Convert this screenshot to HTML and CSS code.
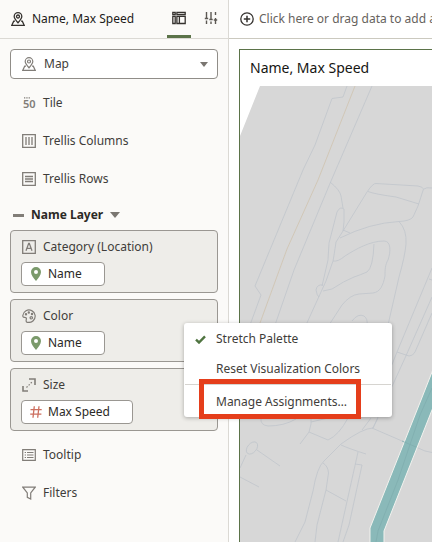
FILE: index.html
```html
<!DOCTYPE html>
<html lang="en">
<head>
<meta charset="utf-8">
<meta name="viewport" content="width=device-width, initial-scale=1">
<title>Name, Max Speed</title>
<link rel="stylesheet" href="styles.css">
</head>
<body>
<svg class="defs" aria-hidden="true">
  <symbol id="map-pin" viewBox="0 0 14 14">
    <path d="M7 10.800C4.800 8.300 3.200 6.500 3.200 4.500a3.800 3.800 0 0 1 7.600 0C10.800 6.500 9.200 8.300 7 10.800Z"/>
    <circle cx="7" cy="4.500" r="1.500"/>
    <path d="M4 9.200H2.700L.8 13.300h12.400L11.300 9.200H10"/>
  </symbol>
  <symbol id="pin" viewBox="0 0 10 14">
    <path fill="#7b9a6b" fill-rule="evenodd" d="M5 0a5 5 0 0 0-5 5c0 3 2.500 6 5 9 2.500-3 5-6 5-9a5 5 0 0 0-5-5Zm0 3a2 2 0 1 1 0 4 2 2 0 0 1 0-4Z"/>
  </symbol>
</svg>

<div class="app">
  <aside class="sidebar">
    <header class="side-head">
      <svg class="icon dark"><use href="#map-pin"/></svg>
      <span class="side-title">Name, Max Speed</span>
      <button class="tab active" type="button" aria-label="Grammar">
        <svg class="icon dark" viewBox="0 0 14 14"><path d="M.8 1.500h2.400v2.200H.8zM.8 5.300h2.400v7.200H.8zM4.900 1.500h8.300v2.200H4.900zM4.900 5.300h8.300v7.200H4.900zM7.400 5.300v7.200"/></svg>
      </button>
      <button class="tab" type="button" aria-label="Properties">
        <svg class="icon sliders" viewBox="0 0 14 14"><path d="M2.500 1v6M2.500 9.500V13M.8 7.500h3.400M7 1v7M7 10.500V13M5.300 8.500h3.400M11.500 1v3M11.500 7V13M9.800 9h3.400"/></svg>
      </button>
    </header>

    <div class="side-body">
      <div class="picker">
        <svg class="icon"><use href="#map-pin"/></svg>
        <select class="picker-select" aria-label="Visualization type"><option>Map</option></select>
        <span class="caret"></span>
      </div>

      <ul class="rows">
        <li class="row">
          <svg class="icon tile-icon" viewBox="0 0 14 14"><path d="M2 1.800h1.300M4.300 1.800h1.300M6.600 1.800h1.300"/><text class="tile-digits" x="1" y="12">50</text></svg>
          Tile
        </li>
        <li class="row">
          <svg class="icon" viewBox="0 0 14 14"><path d="M.7.7h12.600v12.600H.7zM4 3v8M7 3v8M10 3v8" stroke-width="1.300"/></svg>
          Trellis Columns
        </li>
        <li class="row">
          <svg class="icon" viewBox="0 0 14 14"><path d="M.7.7h12.600v12.600H.7zM3 4.500h8M3 7h8M3 9.500h8" stroke-width="1.300"/></svg>
          Trellis Rows
        </li>
      </ul>

      <div class="layer-head">
        <button class="collapse" type="button" aria-label="Collapse layer"></button>
        <h2 class="layer-title">Name Layer</h2>
        <button class="layer-menu" type="button" aria-label="Layer menu"><span class="caret caret-large"></span></button>
      </div>

      <div class="cards">
        <section class="card">
          <h3 class="card-label">
            <svg class="icon" viewBox="0 0 14 14"><path d="M.7.7h12.600v12.600H.7zM4 10.800 6.700 3.400h.6L10 10.800M5 8.300h4" stroke-width="1.300"/></svg>
            Category (Location)
          </h3>
          <button class="chip" type="button"><svg class="chip-pin"><use href="#pin"/></svg>Name</button>
        </section>
        <section class="card">
          <h3 class="card-label">
            <svg class="icon" viewBox="0 0 14 14"><path d="M4.800 13.100C7 13.800 9.500 13.300 11.200 11.700A6.200 6.200 0 1 0 .8 6.500c-.1 1.200.5 2 1.600 1.900 1.300-.1 2.200.3 2 1.600-.2 1-.8 2.500.4 3.100Z"/><circle cx="4" cy="5.200" r=".6"/><circle cx="6.800" cy="3.500" r=".6"/><circle cx="10" cy="5" r=".6"/><circle cx="9.300" cy="8.800" r="1.200"/></svg>
            Color
          </h3>
          <button class="chip" type="button"><svg class="chip-pin"><use href="#pin"/></svg>Name</button>
        </section>
        <section class="card">
          <h3 class="card-label">
            <svg class="icon" viewBox="0 0 14 14"><path d="M7 1h6v6M1 8v5h5" stroke-width="1.600"/><path d="M4.500 9.500 10 4" stroke-dasharray="1.500 1.500"/></svg>
            Size
          </h3>
          <button class="chip chip-wide" type="button">
            <svg class="chip-hash" viewBox="0 0 12 12"><path d="M4.300.3 3 11.700M9 .3 7.700 11.700M.5 3.700h11.200M.2 8.200h11.200"/></svg>Max Speed</button>
        </section>
      </div>

      <ul class="rows">
        <li class="row">
          <svg class="icon" viewBox="0 0 14 14"><path d="M.7 1.700h12.600v10.600H.7zM5 4.500h6.500M5 7h6.500M5 9.500h6.500M2.700 4.500H4M2.700 7H4M2.700 9.500H4" stroke-width="1.200"/></svg>
          Tooltip
        </li>
        <li class="row">
          <svg class="icon" viewBox="0 0 14 14"><path d="M.8 1.200h12.400L8.700 7v6l-3.400-1.700V7Z" stroke-width="1.200"/></svg>
          Filters
        </li>
      </ul>
    </div>
  </aside>

  <main class="main">
    <button class="filter-bar" type="button">
      <svg class="icon dark" viewBox="0 0 14 14"><circle cx="7" cy="7" r="6.200" stroke-width="1.300"/><path d="M7 3.800v6.400M3.800 7h6.400" stroke-width="1.500"/></svg>
      <span>Click here or drag data to add a filter</span>
    </button>
    <section class="viz">
      <h1 class="viz-title">Name, Max Speed</h1>
      <svg class="map" viewBox="240 86 192 456" preserveAspectRatio="xMinYMin slice" role="img" aria-label="Map">
        <path fill="#d7d7d7" d="M260 86H900V1400H240V136Z"/>
        <g fill="none" stroke="#c0c5cb" stroke-width=".8" stroke-linejoin="round">
          <path d="M347 86 343 97 332 98.500 315 145 303 170 255 286 261 295 250 325M372 86 331 181 294 270 275 325"/>
          <path d="M330 182Q340 190 341 196L343 208M322 286 328 260 329 243 337 212Q340 206 344 209L344 222 343 231 336 242Q334 256 333 261L326 281 306 325M323 285Q317 284 316 290 317 296 319 297"/>
          <path d="M343 231 367 192Q373 183 376 183.500L418 186Q423 187 423.500 189L418 206 413 217Q410 221 399 221.500 370 223 340 238M368 191.500Q374 194 396 197L419 204M424 189Q426 187 432 188M343 230 350 233"/>
          <path d="M399 221.500Q407 230 406 244 405 256 399 277L388 325M333 261Q338 262 345 256C356 249 370 241 384 241 391 241 391 251 388 260 385 265 385 270 385 276 383 286 380 292 373 293L359 294Q350 295 342 305L329 325M374 244Q373 268 367 272 360 275 354 277 344 281 332 289L323 291M352 321Q358 313 364 316 368 319 367 325"/>
          <path d="M432 268 397 352 391 367M397 352 409 356Q413 356 415 352L432 313M432 297 405 358 373 428M429 279 432 280"/>
          <path d="M372 428 402 441 425 451 432 452.500M378 418 373 428Q363 428 341 444L324 461Q317 467 313 491L305 522 295 542M371 418 362 430M323 463Q328 466 328.500 473L326 490 317 525 315 542M326 490 346 501M341 445Q350 449 366 454M358 452 338 542M355 464 362 465 349 525 343 542"/>
          <path d="M311 418V424L309 432 300 444M309 432 328 440Q339 435 348 418M261 418Q260 425 268 426 284 426 296 419M311 422 328 418M257 450 280 466M246 455 240 468M240 477 259 487"/>
          <ellipse cx="252" cy="448" rx="4.500" ry="7" transform="rotate(40 252 448)"/>
        </g>
        <path fill="none" stroke="#cfc3ae" stroke-width=".8" d="M355 86 318 180 287 249 260 323"/>
        <path fill="#8ab9b9" stroke="#f2f2ee" stroke-width="1" d="M460 304 432 372 421 400 370 528V1000H384V531L432 410 460 345Z"/>
        <path fill="none" stroke="#7eacae" stroke-width=".7" d="M432 388 420 415 398 480 378 531 376 542M402 441 416 447"/>
      </svg>
    </section>
  </main>
</div>

<div class="menu" role="menu">
  <button class="menu-item" type="button" role="menuitemcheckbox" aria-checked="true">
    <svg class="check" viewBox="0 0 11 9"><path d="M1 4.700 4 7.500 10 1.300"/></svg>Stretch Palette</button>
  <button class="menu-item" type="button" role="menuitem">Reset Visualization Colors</button>
  <hr class="menu-line">
  <button class="menu-item" type="button" role="menuitem">Manage Assignments…</button>
  <span class="highlight"></span>
</div>
</body>
</html>
```

FILE: styles.css
```css
* { box-sizing: border-box; }

body {
  margin: 0;
  font: 12px/18px "Noto Sans", "Open Sans", sans-serif;
  color: #3f3d3a;
  background: #fff;
  overflow: hidden;
}

button, select {
  font: inherit;
  color: inherit;
  margin: 0;
  padding: 0;
  border: 0;
  background: none;
}

h1, h2, h3, ul { margin: 0; padding: 0; font: inherit; list-style: none; }

.defs { position: absolute; width: 0; height: 0; }

.icon {
  flex: none;
  width: 14px;
  height: 14px;
  fill: none;
  stroke: #817d78;
  stroke-width: 1.2;
}
.icon.dark { stroke: #35322f; stroke-width: 1.3; }
.sliders { stroke: #5c5853; stroke-width: 1.4; }

.tile-icon { overflow: visible; }
.tile-digits {
  font: 600 11px "Noto Sans", sans-serif;
  fill: #817d78;
  stroke: none;
}

.caret {
  flex: none;
  border: solid transparent;
  border-width: 5px 4px 0;
  border-top-color: #7a7671;
}
.caret-large { border-width: 6px 5px 0; }

.app { display: flex; min-height: 100vh; }

.sidebar {
  flex: none;
  width: 229px;
  background: #fbfaf8;
  border-right: 1px solid #dbd9d4;
}

.side-head {
  display: flex;
  align-items: center;
  height: 39px;
  padding-left: 11px;
  border-bottom: 1px solid #dbd9d4;
}
.side-title { flex: 1; margin-left: 7px; color: #1d1b19; white-space: nowrap; }

.tab {
  display: flex;
  align-items: center;
  justify-content: center;
  width: 24px;
  height: 38px;
  margin-right: 8px;
  border-bottom: 3px solid transparent;
}
.tab.active { border-bottom-color: #5b7349; }
.tab:last-child { margin-right: 5px; }

.side-body { padding: 10px; }

.picker {
  display: flex;
  align-items: center;
  height: 30px;
  padding: 0 9px 0 11px;
  background: #fff;
  border: 1px solid #908d88;
  border-radius: 4px;
}
.picker-select { flex: 1; height: 28px; padding-left: 8px; appearance: none; }

.rows { padding: 5px 0; }
.row {
  display: flex;
  align-items: center;
  gap: 7px;
  height: 38px;
  padding-left: 12px;
}

.layer-head { display: flex; align-items: center; height: 24px; padding-left: 3px; }
.collapse { width: 11px; height: 3px; background: #817d78; }
.layer-title { margin: 0 7px; font-weight: 700; color: #2b2926; }
.layer-menu { display: flex; }

.cards { display: grid; gap: 6px; margin-top: 3px; }
.card {
  padding: 1px 10px 6px;
  background: #eeede9;
  border: 1px solid #9a9792;
  border-radius: 4px;
}
.card-label { display: flex; align-items: center; gap: 7px; height: 30px; padding-left: 1px; }

.chip {
  display: flex;
  align-items: center;
  gap: 7px;
  width: 84px;
  height: 24px;
  padding-left: 9px;
  background: #fff;
  border: 1px solid #9a9792;
  border-radius: 4px;
  color: #2b2926;
}
.chip-wide { width: 112px; gap: 6px; padding-left: 8px; }
.chip-pin { width: 10px; height: 14px; }
.chip-hash { width: 12px; height: 12px; fill: none; stroke: #cc6f5f; stroke-width: 1.3; }

.main { flex: 1; display: flex; flex-direction: column; min-width: 0; }

.filter-bar {
  display: flex;
  align-items: center;
  gap: 5px;
  height: 39px;
  padding-left: 11px;
  border-bottom: 1px solid #cbc9bf;
  color: #66625d;
  white-space: nowrap;
  overflow: hidden;
}

.viz {
  flex: 1;
  display: flex;
  flex-direction: column;
  margin: 10px 0 0 10px;
  border: solid #5b7349;
  border-width: 1px 0 0 1px;
}
.viz-title {
  height: 36px;
  padding-left: 10px;
  font-size: 14px;
  line-height: 36px;
  color: #161513;
  white-space: nowrap;
}
.map { flex: 1; display: block; width: 100%; min-height: 0; }

.menu {
  position: absolute;
  left: 184px;
  top: 323px;
  width: 208px;
  padding-top: 1px;
  background: #fff;
  border-radius: 3px;
  box-shadow: 0 1px 4px rgba(0, 0, 0, .3);
}
.menu-item {
  display: flex;
  align-items: center;
  width: 100%;
  height: 30px;
  padding-left: 32px;
  white-space: nowrap;
}
.check {
  width: 11px;
  height: 9px;
  margin: 0 10px 0 -21px;
  fill: none;
  stroke: #4f7440;
  stroke-width: 2.4;
}
.menu-line { height: 1px; margin: 0 1px 2px; border: 0; background: #d6d4d0; }
.highlight {
  position: absolute;
  left: 15px;
  top: 56px;
  width: 162px;
  height: 40px;
  border: 5px solid #e53e1b;
  pointer-events: none;
}
```
